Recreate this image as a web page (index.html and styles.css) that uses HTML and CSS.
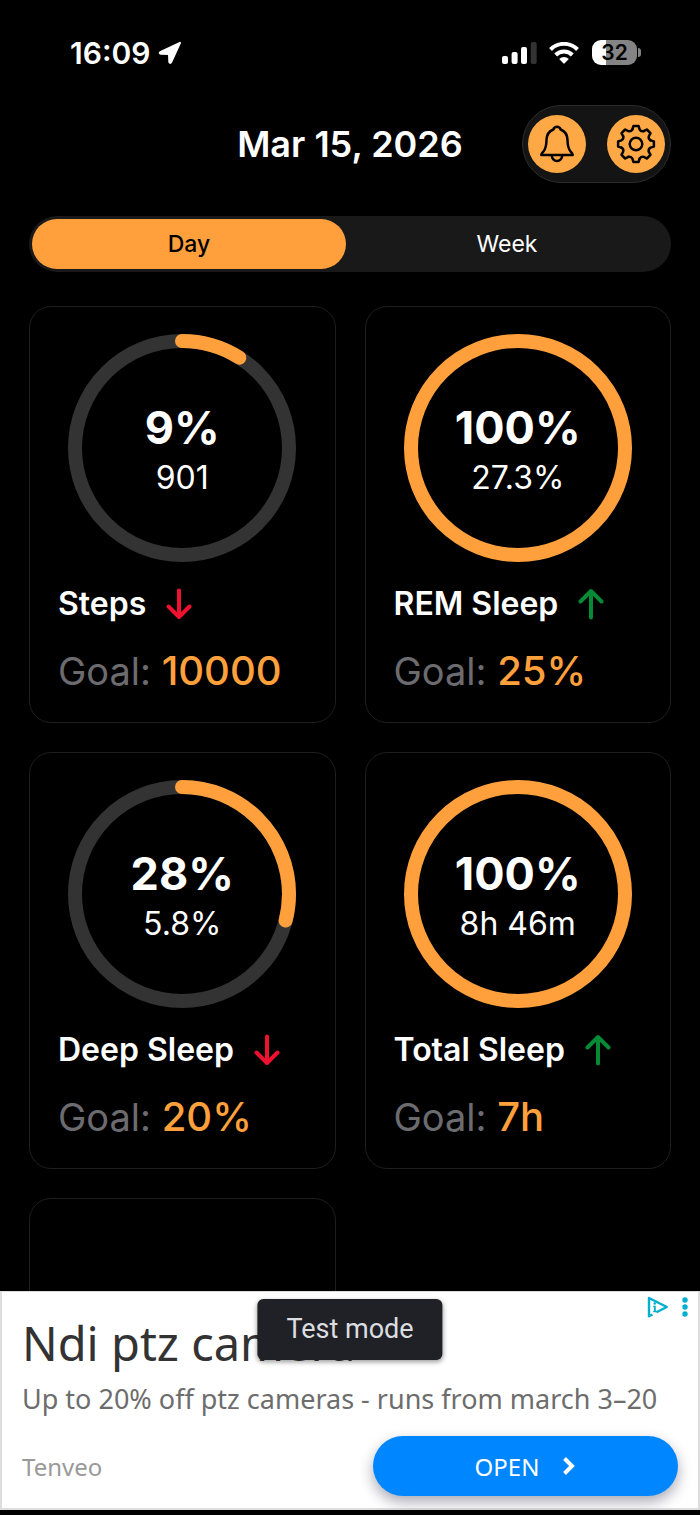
FILE: index.html
```html
<!DOCTYPE html>
<html lang="en">
<head>
<meta charset="utf-8">
<meta name="viewport" content="width=device-width, initial-scale=1">
<title>Daily goals</title>
<link rel="stylesheet" href="styles.css">
</head>
<body>
<div class="status">
  <div class="status-side">
    <span class="clock">16:09</span>
    <svg class="loc" viewBox="0 0 24 24" aria-hidden="true"><path d="M22 1.800 2.200 11.200Q1 12.400 2.800 12.700L11 13.100 11.300 21Q12.200 22.800 13.200 21Z" fill="#fff" stroke="#fff" stroke-width="2" stroke-linejoin="round"/></svg>
  </div>
  <div class="status-side">
    <svg class="signal" viewBox="0 0 35 22" aria-hidden="true"><g fill="#fff"><rect x="0" y="14" width="6" height="8" rx="2"/><rect x="9.600" y="10" width="6" height="12" rx="2"/><rect x="19" y="5" width="6" height="17" rx="2"/></g><rect x="28.700" y="0" width="6" height="22" rx="2" fill="#333"/></svg>
    <svg class="wifi" viewBox="0 0 30 22" aria-hidden="true"><g fill="none" stroke="#fff" stroke-width="4"><path d="M1.500 7.500a19 19 0 0 1 27 0"/><path d="M6.700 13a11.800 11.800 0 0 1 16.600 0"/></g><path d="M10.200 17a6.800 6.800 0 0 1 9.600 0L15.700 21.300q-.7.700-1.400 0Z" fill="#fff"/></svg>
    <div class="battery"><span class="battery-level">32</span><span class="battery-tip"></span></div>
  </div>
</div>

<header class="header">
  <h1 class="date">Mar 15, 2026</h1>
  <div class="actions">
    <button class="round" type="button" aria-label="Notifications">
      <svg viewBox="0 0 40 40" aria-hidden="true"><g fill="none" stroke="#000" stroke-width="2.500" stroke-linejoin="round"><path d="M16.300 5.500a3.900 3.900 0 0 1 7.400 0C28.200 7.200 30.300 11 30.500 16c.2 6.500.8 9 3 11.300 1.500 1.500 2 2.200 2.200 3.700H4.300c.2-1.500.7-2.200 2.200-3.700 2.200-2.300 2.800-4.800 3-11.300.2-5 2.300-8.800 6.800-10.500Z"/><path d="M14.800 31.500a5.200 5.600 0 0 0 10.400 0"/></g></svg>
    </button>
    <button class="round" type="button" aria-label="Settings">
      <svg viewBox="-20 -20 40 40" aria-hidden="true"><defs><path id="tooth" d="M-3.600-14.600-2.600-17.900H2.600L3.600-14.600Q4.970-12 7.780-12.870"/></defs><g fill="none" stroke="#000" stroke-width="2.500" stroke-linejoin="round" stroke-linecap="round"><circle r="6.300"/><use href="#tooth"/><use href="#tooth" transform="rotate(45)"/><use href="#tooth" transform="rotate(90)"/><use href="#tooth" transform="rotate(135)"/><use href="#tooth" transform="rotate(180)"/><use href="#tooth" transform="rotate(225)"/><use href="#tooth" transform="rotate(270)"/><use href="#tooth" transform="rotate(315)"/></g></svg>
    </button>
  </div>
</header>

<div class="segmented">
  <button class="segment segment-on" type="button" aria-pressed="true">Day</button>
  <button class="segment" type="button" aria-pressed="false">Week</button>
</div>

<main class="cards">
  <section class="card">
    <div class="ring">
      <svg class="ring-art" viewBox="0 0 228 228" aria-hidden="true"><circle class="track" cx="114" cy="114" r="107"/><circle class="arc" cx="114" cy="114" r="107" pathLength="100" stroke-dasharray="9 100"/></svg>
      <strong class="percent">9%</strong><span class="amount">901</span>
    </div>
    <h2 class="name">Steps <svg class="trend down" viewBox="0 0 26 32" role="img" aria-label="down"><path d="M13 2.500v26M2.500 18.500 13 29l10.500-10.500"/></svg></h2>
    <p class="goal">Goal: <span class="target">10000</span></p>
  </section>
  <section class="card">
    <div class="ring">
      <svg class="ring-art" viewBox="0 0 228 228" aria-hidden="true"><circle class="arc" cx="114" cy="114" r="107"/></svg>
      <strong class="percent">100%</strong><span class="amount">27.3%</span>
    </div>
    <h2 class="name">REM Sleep <svg class="trend up" viewBox="0 0 26 32" role="img" aria-label="up"><path d="M13 29.500v-26M2.500 13.500 13 3l10.500 10.500"/></svg></h2>
    <p class="goal">Goal: <span class="target">25%</span></p>
  </section>
  <section class="card">
    <div class="ring">
      <svg class="ring-art" viewBox="0 0 228 228" aria-hidden="true"><circle class="track" cx="114" cy="114" r="107"/><circle class="arc" cx="114" cy="114" r="107" pathLength="100" stroke-dasharray="29 100"/></svg>
      <strong class="percent">28%</strong><span class="amount">5.8%</span>
    </div>
    <h2 class="name">Deep Sleep <svg class="trend down" viewBox="0 0 26 32" role="img" aria-label="down"><path d="M13 2.500v26M2.500 18.500 13 29l10.500-10.500"/></svg></h2>
    <p class="goal">Goal: <span class="target">20%</span></p>
  </section>
  <section class="card">
    <div class="ring">
      <svg class="ring-art" viewBox="0 0 228 228" aria-hidden="true"><circle class="arc" cx="114" cy="114" r="107"/></svg>
      <strong class="percent">100%</strong><span class="amount">8h 46m</span>
    </div>
    <h2 class="name">Total Sleep <svg class="trend up" viewBox="0 0 26 32" role="img" aria-label="up"><path d="M13 29.500v-26M2.500 13.500 13 3l10.500 10.500"/></svg></h2>
    <p class="goal">Goal: <span class="target">7h</span></p>
  </section>
  <section class="card card-empty"></section>
</main>

<aside class="ad">
  <h2 class="ad-title">Ndi ptz camera</h2>
  <p class="ad-text">Up to 20% off ptz cameras - runs from march 3–20</p>
  <div class="ad-row">
    <span class="ad-brand">Tenveo</span>
    <a class="ad-open" href="#">OPEN <svg class="chevron" viewBox="0 0 14 20" aria-hidden="true"><path d="m2.500 2.500 7.500 7.500-7.500 7.500" fill="none" stroke="#fff" stroke-width="4"/></svg></a>
  </div>
  <div class="ad-marks">
    <svg class="adchoices" viewBox="0 0 22 22" aria-hidden="true"><path d="M5.500 18.500 2 20.300V2l17.800 9L9.500 16.300" fill="none" stroke="#00aecd" stroke-width="2.400" stroke-linejoin="round"/><circle cx="7.700" cy="7.500" r="1.300" fill="#00aecd"/><path d="M6.200 10.500h1.700v5M6.200 15.500h3.600" fill="none" stroke="#00aecd" stroke-width="1.700"/></svg>
    <svg class="dots" viewBox="0 0 6 22" aria-hidden="true"><g fill="#00aecd"><circle cx="3" cy="4" r="2.700"/><circle cx="3" cy="11" r="2.700"/><circle cx="3" cy="18" r="2.700"/></g></svg>
  </div>
  <div class="toast">Test mode</div>
</aside>
</body>
</html>
```
FILE: styles.css
```css
* { box-sizing: border-box; }

body {
  margin: 0;
  height: 100vh;
  display: flex;
  flex-direction: column;
  background: #000;
  color: #fff;
  font-family: Inter, "Liberation Sans", sans-serif;
  padding-bottom: 5px;
}

h1, h2, p { margin: 0; }
button { border: 0; padding: 0; font: inherit; cursor: pointer; }
svg { display: block; flex: none; }

.status {
  display: flex;
  justify-content: space-between;
  align-items: center;
  height: 105px;
  flex: none;
  padding: 0 59px 0 70px;
}
.status-side { display: flex; align-items: center; gap: 8px; }
.clock { font-size: 30px; font-weight: 600; line-height: 36px; }
.loc { width: 24px; height: 24px; }
.signal { width: 35px; height: 22px; margin-right: 4px; }
.wifi { width: 30px; height: 22px; margin-right: 5px; }
.battery { display: flex; align-items: center; gap: 1px; }
.battery-level {
  width: 45px;
  border-radius: 9px;
  background: linear-gradient(90deg, #fff 32%, #848484 32%);
  color: #000;
  font-size: 21px;
  font-weight: 600;
  line-height: 25px;
  text-align: center;
}
.battery-tip { width: 3px; height: 9px; border-radius: 0 3px 3px 0; background: #848484; }

.header {
  display: grid;
  grid-template-columns: 1fr auto 1fr;
  align-items: center;
  flex: none;
  padding: 0 29px;
}
.date { grid-column: 2; font-size: 36px; font-weight: 600; line-height: 42px; }
.actions {
  justify-self: end;
  display: flex;
  gap: 21px;
  padding: 9px 5px;
  border: 1px solid #2c2c2c;
  border-radius: 40px;
  background: #141414;
}
.round {
  display: grid;
  place-items: center;
  width: 58px;
  height: 58px;
  border-radius: 50%;
  background: #ffa946;
}
.round svg { width: 40px; height: 40px; }

.segmented {
  display: grid;
  grid-template-columns: 314fr 322fr;
  flex: none;
  margin: 33px 29px 34px;
  padding: 3px;
  border-radius: 28px;
  background: #19191a;
}
.segment {
  height: 50px;
  border-radius: 25px;
  background: none;
  color: #fff;
  font-size: 23px;
  font-weight: 400;
}
.segment-on { background: #ffa03c; color: #000; font-weight: 500; }

.cards {
  flex: 1;
  min-height: 0;
  overflow: hidden;
  display: grid;
  grid-template-columns: 1fr 1fr;
  grid-auto-rows: max-content;
  gap: 29px;
  padding: 0 29px;
}
.card {
  border: 1px solid #1e1e1e;
  border-radius: 22px;
  padding: 27px 28px;
}
.card-empty { min-height: 417px; }

.ring {
  display: grid;
  width: 228px;
  height: 228px;
  margin: 0 auto 22px;
  padding-top: 6px;
  justify-items: center;
  align-content: center;
  position: relative;
}
.ring-art { position: absolute; inset: 0; transform: rotate(-90deg); }
.ring-art circle { fill: none; stroke-width: 14px; }
.track { stroke: #333; }
.arc { stroke: #ffa03c; stroke-linecap: round; }
.percent { font-size: 45px; font-weight: 700; line-height: 54px; }
.amount { font-size: 32px; line-height: 46px; }

.name {
  display: flex;
  align-items: center;
  gap: 20px;
  font-size: 32px;
  font-weight: 600;
  line-height: 40px;
}
.trend { width: 26px; height: 32px; fill: none; stroke-width: 4px; stroke-linecap: round; stroke-linejoin: round; }
.down { stroke: #ee1230; }
.up { stroke: #078a35; }

.goal { margin-top: 23px; font-size: 38px; line-height: 48px; color: #6c6c70; }
.target { font-size: 40px; color: #ffa03c; font-weight: 500; }

.ad {
  flex: none;
  position: relative;
  padding: 19px 20px 12px;
  border: 2px solid #ddd;
  border-top-width: 1px;
  background: #fff;
  font-family: "Noto Sans", sans-serif;
}
.ad-title { font-size: 47px; font-weight: 400; line-height: 64px; color: #333; }
.ad-text { font-size: 27px; line-height: 48px; color: #6d6d6d; white-space: nowrap; }
.ad-row { display: flex; justify-content: space-between; align-items: center; margin-top: 13px; }
.ad-brand { font-size: 24px; color: #999; }
.ad-open {
  display: flex;
  align-items: center;
  justify-content: center;
  gap: 23px;
  width: 305px;
  height: 60px;
  border-radius: 30px;
  background: #0086ff;
  box-shadow: 0 6px 14px rgba(40, 40, 70, .4);
  color: #fff;
  font-size: 24px;
  text-decoration: none;
}
.chevron { width: 14px; height: 20px; }
.ad-marks { position: absolute; top: 4px; right: 10px; display: flex; gap: 13px; }
.adchoices { width: 22px; height: 22px; }
.dots { width: 6px; height: 22px; }
.toast {
  position: absolute;
  top: 7px;
  left: 50%;
  transform: translateX(-50%);
  padding: 0 29px;
  border-radius: 6px;
  background: #202126;
  box-shadow: 0 2px 5px rgba(0, 0, 0, .4);
  color: #dcdde0;
  font: 27px/61px Roboto, sans-serif;
  white-space: nowrap;
}
```
